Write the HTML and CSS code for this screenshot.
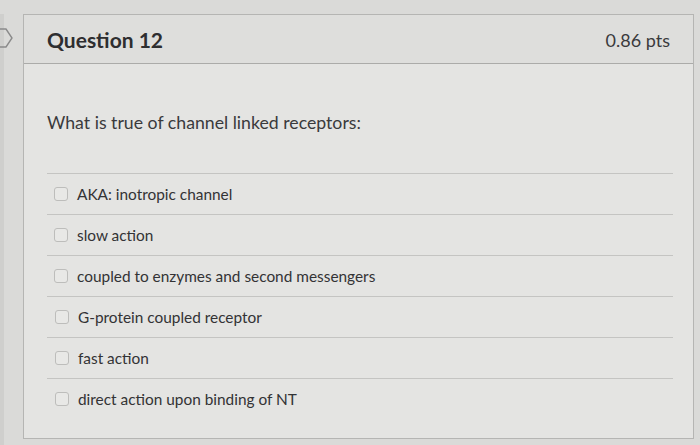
FILE: index.html
```html
<!DOCTYPE html>
<html lang="en">
<head>
    <meta charset="UTF-8">
    <title>Question 12</title>
    <link rel="stylesheet" href="styles.css">
</head>
<body>
    <div class="page">
        <div class="side">
            <svg class="side-icon" width="14" height="20" viewBox="0 0 14 20">
                <path d="M-6 1 L6 1 L12 10 L6 19 L-6 19" fill="none" stroke="#8a8a8a" stroke-width="1.4"/>
            </svg>
        </div>
        <div class="question">
            <div class="header">
                <div class="title">Question 12</div>
                <div class="points">0.86 pts</div>
            </div>
            <div class="content">
                <div class="prompt">What is true of channel linked receptors:</div>
                <div class="answers">
                    <div class="answer"><span class="box"></span>AKA: inotropic channel</div>
                    <div class="answer"><span class="box"></span>slow action</div>
                    <div class="answer"><span class="box"></span>coupled to enzymes and second messengers</div>
                    <div class="answer"><span class="box"></span>G-protein coupled receptor</div>
                    <div class="answer"><span class="box"></span>fast action</div>
                    <div class="answer"><span class="box"></span>direct action upon binding of NT</div>
                </div>
            </div>
        </div>
    </div>
</body>
</html>
```

FILE: styles.css
```css
body {
    margin: 0;
    font-family: Lato, "Open Sans", sans-serif;
    background-color: #dadad8;
    color: #3a3a3c;
    height: 445px;
    overflow: hidden;
}
.page {
    display: flex;
    height: 445px;
    padding-top: 14px;
    box-sizing: border-box;
}
.side {
    width: 23px;
    flex-shrink: 0;
    border-left: 4px solid #cfcfcd;
    box-sizing: border-box;
}
.side-icon {
    display: block;
    margin-top: 14px;
    margin-left: -4px;
}
.question {
    width: 669px;
    border: 1px solid #b5b5b3;
    background-color: #e4e4e2;
    margin-bottom: 6px;
}
.header {
    display: flex;
    justify-content: space-between;
    align-items: center;
    height: 48px;
    padding: 0 23px 0 23px;
    background-color: #dededc;
    border-bottom: 1px solid #ababa9;
}
.title {
    font-size: 21px;
    font-weight: bold;
    color: #2e2e30;
}
.points {
    font-size: 18px;
    color: #3a3a3c;
    margin-top: 1px;
}
.content {
    padding: 48px 20px 0 23px;
}
.prompt {
    font-size: 17.7px;
    color: #3a3a3c;
    margin-bottom: 40px;
}
.answer {
    display: flex;
    align-items: center;
    height: 40px;
    border-top: 1px solid #c4c4c2;
    font-size: 15.4px;
    color: #333335;
    padding-left: 7px;
}
.answer:nth-child(n+4) {
    padding-left: 8px;
}
.box {
    width: 12px;
    height: 12px;
    border: 1px solid #bdbdbb;
    border-radius: 3px;
    background-color: #e8e8e6;
    margin-right: 9px;
}
```
